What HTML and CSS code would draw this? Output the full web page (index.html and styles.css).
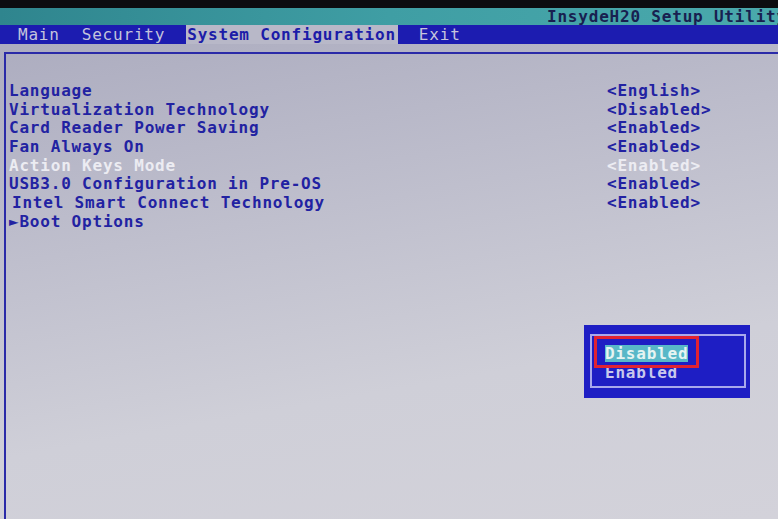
FILE: index.html
```html
<!DOCTYPE html>
<html lang="en">
<head>
    <meta charset="UTF-8">
    <title>InsydeH20 Setup Utility</title>
    <link rel="stylesheet" href="styles.css">
</head>
<body>
    <div class="screen">
        <div class="top-strip"></div>
        <div class="title-bar">InsydeH20 Setup Utility</div>
        <div class="menu-bar">
            <span class="menu-item">Main</span>
            <span class="menu-item">Security</span>
            <span class="menu-item active">System Configuration</span>
            <span class="menu-item">Exit</span>
        </div>
        <div class="menu-gap"></div>

        <div class="panel">
            <ul class="settings">
                <li><span>Language</span><span class="value">&lt;English&gt;</span></li>
                <li><span>Virtualization Technology</span><span class="value">&lt;Disabled&gt;</span></li>
                <li><span>Card Reader Power Saving</span><span class="value">&lt;Enabled&gt;</span></li>
                <li><span>Fan Always On</span><span class="value">&lt;Enabled&gt;</span></li>
                <li class="selected"><span>Action Keys Mode</span><span class="value">&lt;Enabled&gt;</span></li>
                <li><span>USB3.0 Configuration in Pre-OS</span><span class="value">&lt;Enabled&gt;</span></li>
                <li class="indent"><span>Intel Smart Connect Technology</span><span class="value">&lt;Enabled&gt;</span></li>
                <li class="submenu"><span>&#9658;Boot Options</span></li>
            </ul>
        </div>

        <div class="popup">
            <div class="popup-inner">
                <div class="option current">Disabled</div>
                <div class="option">Enabled</div>
                <div class="marker"></div>
            </div>
        </div>
    </div>
</body>
</html>
```

FILE: styles.css
```css
body {
    margin: 0;
    background-color: #c8c8d4;
    font-family: "DejaVu Sans Mono", "Liberation Mono", monospace;
    font-weight: bold;
    font-size: 16px;
    letter-spacing: 0.8px;
}
.screen {
    position: relative;
    width: 778px;
    height: 519px;
    overflow: hidden;
    background: linear-gradient(170deg, #a9a9bd 0%, #bcbccb 35%, #cfcfd8 70%, #d3d2da 100%);
}
.top-strip {
    height: 8px;
    background-color: #0c0c10;
}
.title-bar {
    height: 17px;
    line-height: 17px;
    padding-left: 547px;
    white-space: nowrap;
    color: #182050;
    background: linear-gradient(90deg, #2f858e 0%, #3f9ea4 50%, #4aa9ac 100%);
}
.menu-bar {
    display: flex;
    gap: 20px;
    height: 19px;
    line-height: 19px;
    padding-left: 17px;
    background-color: #1c1cb0;
}
.menu-item {
    padding: 0 1px;
    color: #c4c4dc;
    font-weight: normal;
}
.menu-item.active {
    padding: 0 2px 0 1px;
    color: #1c1ca8;
    font-weight: bold;
    background-color: #b8b8c8;
}
.menu-gap {
    height: 8px;
}
.panel {
    height: 475px;
    margin-left: 4px;
    border-top: 2px solid #2a2aa8;
    border-left: 2px solid #2a2aa8;
}
.settings {
    list-style-type: none;
    margin: 0;
    padding: 28px 0 0 3px;
}
.settings li {
    display: grid;
    grid-template-columns: 598px auto;
    height: 18.7px;
    line-height: 18.7px;
    white-space: pre;
    color: #2222a2;
}
.settings li.indent {
    padding-left: 3px;
    grid-template-columns: 595px auto;
}
.settings li.selected {
    color: #ececf2;
}
.popup {
    position: absolute;
    left: 584px;
    top: 325px;
    width: 166px;
    height: 73px;
    background-color: #1e1ec4;
}
.popup-inner {
    position: relative;
    height: 54px;
    margin: 9px 4px 0 6px;
    padding: 8px 0 0 13px;
    box-sizing: border-box;
    border: 2px solid #a8a8ec;
}
.option {
    display: inline-block;
    height: 17px;
    line-height: 17px;
    color: #c8c8ec;
}
.option.current {
    color: #e6f4f2;
    background-color: #58b8c8;
}
.marker {
    position: absolute;
    left: 2px;
    top: 0;
    width: 99px;
    height: 26px;
    border: 3px solid #e02232;
}
```
